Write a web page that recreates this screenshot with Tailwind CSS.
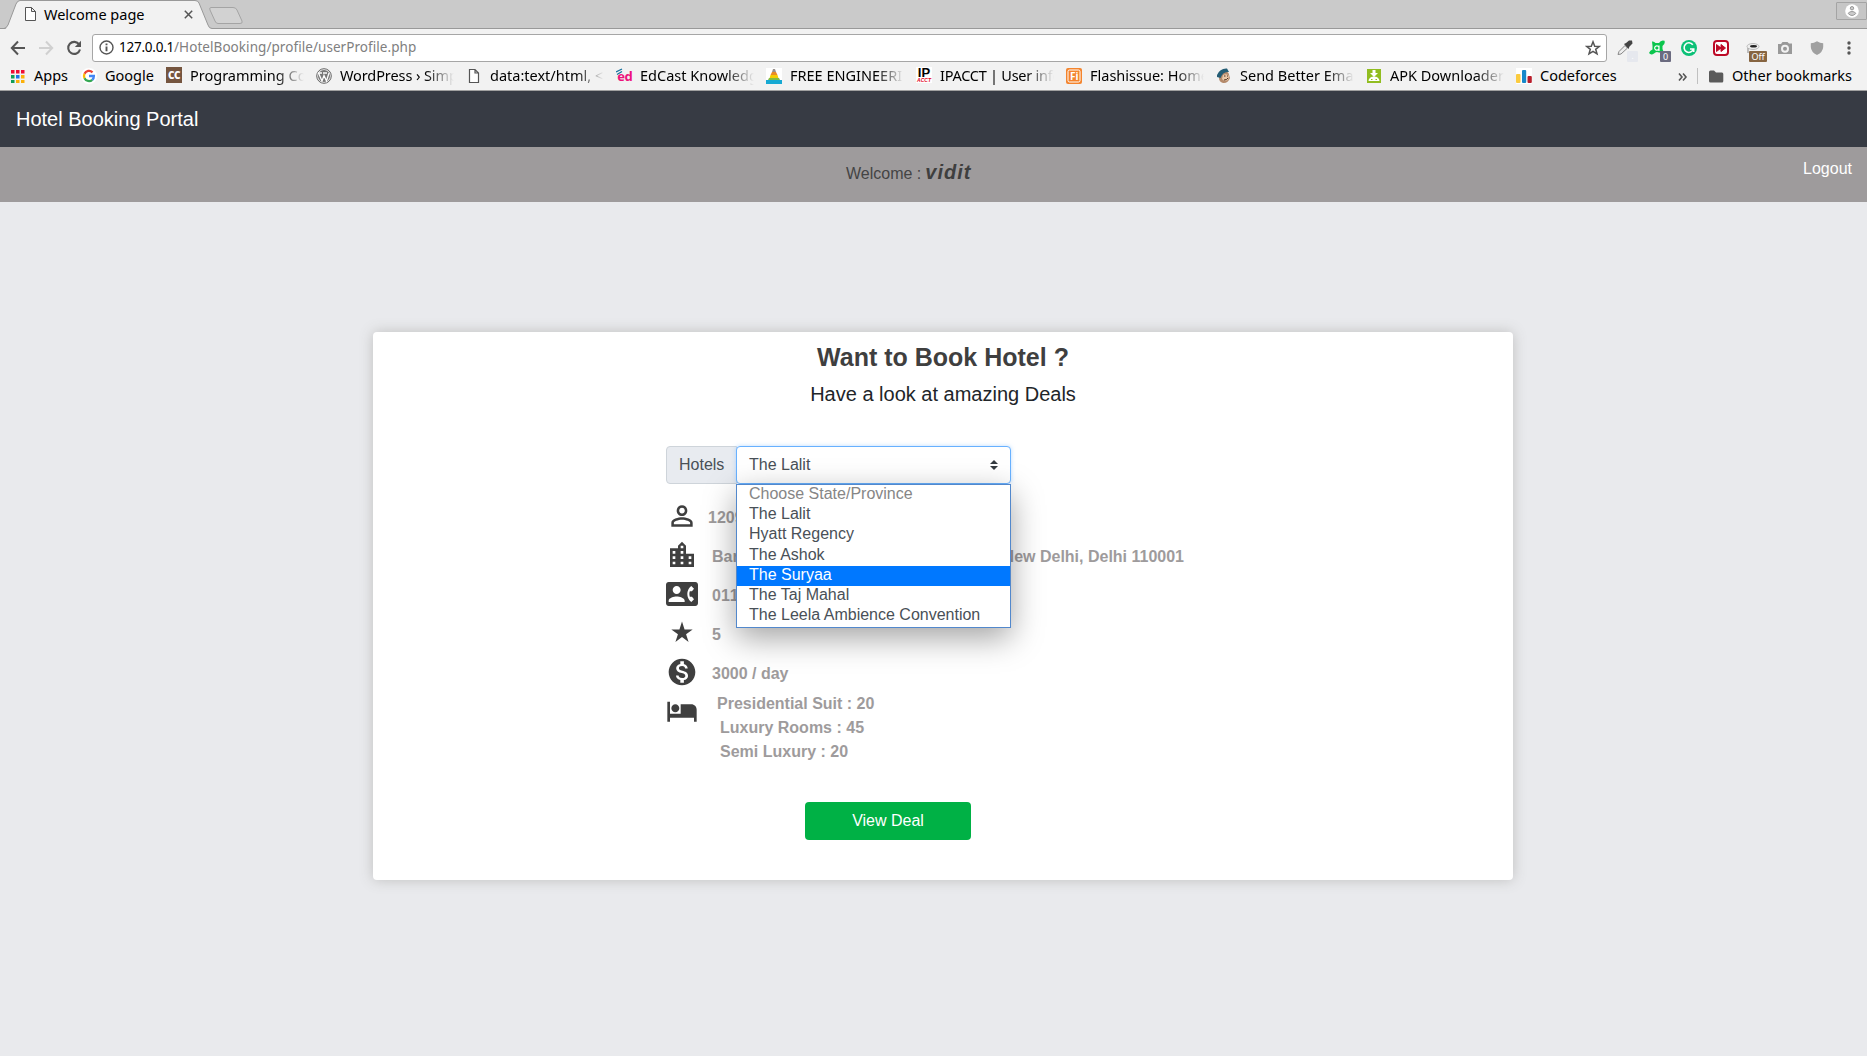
<!DOCTYPE html>
<html lang="en"><head><meta charset="utf-8"><title>Welcome page</title>
<script src="https://cdn.jsdelivr.net/npm/@tailwindcss/browser@4"></script></head>
<body class="h-[1056px] w-[1867px] overflow-hidden bg-[#e9eaed] font-['Liberation_Sans',sans-serif] text-base text-[#212529]">
<div class="h-[91px] border-b border-[#a0a0a0] bg-[#f2f2f2] font-['Noto_Sans',sans-serif] text-[14.5px] text-black">
  <!-- tab strip -->
  <div class="relative flex h-[29px] border-b border-[#999] bg-[#cacaca]">
    <svg class="absolute left-0 top-0" width="250" height="29" fill="none"><path d="M5 29 C7 28 7 27 8 25 L16 4 Q18 .5 20 .5 H195 Q198 .5 199 3 L208 25 Q209 28.500 212 28.500 V29Z" fill="#f2f2f2"/><path d="M0 28.500H4Q6 28.500 8 25L16 4Q17.500 .5 20 .5H195Q198 .5 199 3L208 25Q209 28.500 212 28.500" stroke="#999"/><path d="M211 7.500H233Q236 7.500 237 10L242 21Q243 23.500 240 23.500H218Q216 23.500 215 21L210 10Q209 7.500 211 7.500Z" fill="#d2d2d2" stroke="#a4a4a4"/></svg>
    <div class="relative flex h-full w-[205px] items-center pl-[25px]">
      <svg width="11" height="14" viewBox="0 0 11 14" fill="#fff" stroke="#555"><path d="M.5.5H6.500L10.500 4.500V13.500H.5ZM6.500 .5V4.500H10.500"/></svg>
      <span class="ml-2 w-[140px] leading-7">Welcome page</span>
      <svg width="9" height="9" stroke="#555" stroke-width="1.500"><path d="M.8.8 8.200 8.200M8.200.8.8 8.200"/></svg>
    </div>
    <div class="ml-auto mt-[2px] flex h-[18px] w-[31px] items-center justify-center rounded-[1px] border border-[#a4a4a4] bg-[#c6c6c6]"><svg width="14" height="14"><circle cx="7" cy="7" r="6.800" fill="#fff"/><circle cx="7" cy="4.200" r="1.700" fill="#ccc" stroke="#999"/><path d="M3.200 9.500Q4 7.500 7 7.500T10.800 9.500Q7 13.500 3.200 9.500" fill="#ccc" stroke="#999"/></svg></div>
  </div>
  <!-- toolbar -->
  <div class="flex h-[33px] items-center pl-[10px] pt-1">
    <svg width="16" height="16" fill="none" stroke="#555" stroke-width="2"><path d="M15 8H2.500M8 1.500 1.800 8 8 14.500"/></svg>
    <svg class="ml-[13px]" width="16" height="16" fill="none" stroke="#d0d0d0" stroke-width="2"><path d="M0 8H12.500M7 1.500 13.200 8 7 14.500"/></svg>
    <svg class="ml-[11px]" width="16" height="16" fill="none" stroke="#555" stroke-width="2.100"><path d="M13.200 4.500A6 6 0 1 0 14 9.500"/><path d="M15 .8V7H8.800Z" fill="#555" stroke="none"/></svg>
    <div class="ml-[10px] flex h-[28px] w-[1515px] items-center rounded-[3px] border border-[#a6a6a6] bg-white pl-[6px] pr-[5px]">
      <svg width="15" height="15" fill="none" stroke="#555" stroke-width="1.400"><circle cx="7.500" cy="7.500" r="6.500"/><path d="M7.500 6.500V11.300M7.500 3.500V5.300" stroke-width="1.900"/></svg>
      <span class="ml-[5px] whitespace-nowrap text-[13.5px] tracking-[0.06px] text-[#808080]"><span class="tracking-[-0.24px] text-black">127.0.0.1</span>/HotelBooking/profile/userProfile.php</span>
      <svg class="ml-auto" width="16" height="16" viewBox="0 0 16 16" fill="none" stroke="#555" stroke-width="1.500"><path d="M8 1.800 9.700 6.200 14.400 6.400 10.700 9.300 12 13.900 8 11.300 4 13.900 5.300 9.300 1.600 6.400 6.300 6.200Z"/></svg>
    </div>
    <div class="ml-[9px] flex items-center">
      <div class="relative h-4 w-[33px]"><svg width="18" height="16"><path d="M2 14.500 3 11.500 9 5.500 11.500 8 5 14Z" fill="#eee" stroke="#888"/><path d="M8 4 10 3 13 .5 16 .5 16.500 3.500 13.500 6.500 12.500 9Z" fill="#444"/></svg><span class="absolute left-[11px] top-[11px] flex h-[11px] w-[11px] items-center justify-center rounded-[1px] bg-[#e6e8ee] text-[8px] leading-none text-white">.</span></div>
      <div class="relative h-4 w-8"><svg width="17" height="16"><path d="M3 1.500Q5 1 6.500 3H10Q12-.5 15.500.8Q16.500 4 13.500 6V9L15 13 10 12.500Q7 11 5 13.500Q2 15.500 0 13Q1 10 3.500 9.500V6Z" fill="#0bc54d"/><path d="M10 5.500V11M10 7.500A2.200 2.200 0 1 0 10 8.500" fill="none" stroke="#fff" stroke-width="1.200"/></svg><span class="absolute left-[11px] top-[11px] flex h-[11px] w-[11px] items-center justify-center rounded-[1px] bg-[#6b6b80] text-[9px] leading-none text-white">0</span></div>
      <svg class="mr-4" width="16" height="16"><circle cx="8" cy="8" r="8" fill="#0cc177"/><path d="M11.800 4.800A4.800 4.800 0 1 0 12.500 9H9M12.700 8.500V12" fill="none" stroke="#fff" stroke-width="1.600"/></svg>
      <svg class="mr-4" width="16" height="16"><rect x="1" y="1" width="14" height="14" rx="3" fill="#fff" stroke="#bd0a27" stroke-width="2"/><path d="M3.500 4.500 8 8 3.500 11.500ZM8 4.500 12.500 8 8 11.500Z" fill="#bd0a27" stroke="#bd0a27"/></svg>
      <div class="relative h-4 w-8"><svg width="16" height="16"><ellipse cx="8" cy="6.500" rx="6" ry="3" fill="#eee" stroke="#bbb"/><ellipse cx="8.500" cy="6.200" rx="3.500" ry="1.300" fill="#222"/><path d="M3 8V13" stroke="#aaa" stroke-width="1.500"/></svg><span class="absolute left-[4px] top-[11px] flex h-[11px] w-[18px] items-center justify-center rounded-[1px] bg-[#876541] text-[9px] leading-none text-white">Off</span></div>
      <svg class="mr-4" width="16" height="16"><path d="M1 4H4L5.500 2H10.500L12 3.500H15V14H1Z" fill="#999"/><circle cx="8" cy="8.700" r="3" fill="#999" stroke="#f2f2f2" stroke-width="2"/></svg>
      <svg class="mr-4" width="16" height="16"><path d="M8 1.200Q11 3 14.200 3.200V7Q14 12 8 15Q2 12 1.800 7V3.200Q5 3 8 1.200" fill="#a0a0a0"/></svg>
      <svg width="16" height="16" fill="#555"><circle cx="8" cy="3" r="1.700"/><circle cx="8" cy="8" r="1.700"/><circle cx="8" cy="13" r="1.700"/></svg>
    </div>
  </div>
  <!-- bookmarks bar -->
  <div class="flex h-[28px] items-center whitespace-nowrap pl-[10px] leading-[26px] [&>div]:h-[26px] [&>div]:-mt-[2px] [&_svg]:mt-px">
    <div class="flex w-[71px] items-center gap-[8px]"><svg width="16" height="16"><path d="M1 2h3.500v3.500H1zM6 2h3.500v3.500H6zM11 2h3.500v3.500H11z" fill="#ef0c35"/><path d="M1 7h3.500v3.500H1z" fill="#0f9d58"/><path d="M6 7h3.500v3.500H6z" fill="#1a73e8"/><path d="M11 7h3.500v3.500H11zM6 12h3.500v3H6zM11 12h3.500v3H11z" fill="#fbb009"/><path d="M1 12h3.500v3H1z" fill="#0f9d58"/></svg>Apps</div>
    <div class="flex w-[85px] items-center gap-[8px]"><svg width="16" height="16" viewBox="0 0 16 16"><circle cx="8" cy="8" r="8" fill="#fff"/><g fill="none" stroke-width="2.300"><path d="M11.500 4.300A5 5 0 0 0 3.500 5.800" stroke="#ea4335"/><path d="M3.500 5.800A5 5 0 0 0 3.500 10.200" stroke="#fbbc05"/><path d="M3.500 10.200A5 5 0 0 0 11.300 11.800" stroke="#34a853"/><path d="M11.300 11.800A5 5 0 0 0 12.900 8H8" stroke="#4285f4"/></g></svg>Google</div>
    <div class="flex w-[150px] items-center gap-[8px]"><span class="flex h-4 w-4 shrink-0 items-center justify-center bg-[#75553f] text-[10px] font-black leading-none tracking-tighter text-white">CC</span><span class="w-[114px] overflow-hidden mask-r-from-75% mask-r-to-100%">Programming Co</span></div>
    <div class="flex w-[150px] items-center gap-[8px]"><svg class="shrink-0" width="16" height="16"><circle cx="8" cy="8" r="7.300" fill="#eee" stroke="#666"/><circle cx="8" cy="8" r="6" fill="#777"/><path d="M2.500 5 6 13 8 7.500 10.500 13 13 5M1.800 5H6M7 5H11" fill="none" stroke="#fff" stroke-width="1.300"/></svg><span class="w-[114px] overflow-hidden tracking-[-0.1px] mask-r-from-75% mask-r-to-100%">WordPress › Simp</span></div>
    <div class="flex w-[150px] items-center gap-[8px]"><svg class="shrink-0" width="16" height="16" fill="#fff" stroke="#555" stroke-width="1.200"><path d="M3.500 1.500H9L12.500 5V14.500H3.500ZM9 1.500V5H12.500"/></svg><span class="w-[114px] overflow-hidden mask-r-from-75% mask-r-to-100%">data:text/html, &lt;</span></div>
    <div class="flex w-[150px] items-center gap-[8px]"><span class="relative flex h-4 w-4 shrink-0 items-end justify-end text-[13px] font-bold leading-[13px] tracking-tighter text-[#ed127c]">ed<svg class="absolute left-0 top-0" width="8" height="8" fill="none" stroke="#16719e" stroke-width="1.300"><path d="M0 4 6 1M1 6.500 6 3.500"/></svg></span><span class="w-[114px] overflow-hidden mask-r-from-75% mask-r-to-100%">EdCast Knowledg</span></div>
    <div class="flex w-[150px] items-center gap-[8px]"><svg class="shrink-0" width="16" height="16"><path fill="#fff" d="M0 0h16v16H0z"/><path d="M7 1H9L10 4H6Z" fill="#98908a"/><path d="M6 4H10L11.500 7H4.500Z" fill="#e98b25"/><path d="M4.500 7H11.500L13 12H3Z" fill="#f5cc00"/><path d="M0 12H16V16H0Z" fill="#16a9d3"/><path d="M3 10H13L14 12H2Z" fill="#80bd45"/></svg><span class="w-[114px] overflow-hidden mask-r-from-75% mask-r-to-100%">FREE ENGINEERI</span></div>
    <div class="flex w-[150px] items-center gap-[8px]"><span class="flex h-4 w-4 shrink-0 flex-col items-center justify-center bg-white font-['Liberation_Sans',sans-serif] font-bold"><span class="text-[13px] leading-[11px]">IP</span><span class="text-[5px] italic leading-[5px] text-[#e3001b]">ACCT</span></span><span class="w-[114px] overflow-hidden tracking-[-0.25px] mask-r-from-75% mask-r-to-100%">IPACCT | User info</span></div>
    <div class="flex w-[150px] items-center gap-[8px]"><svg class="shrink-0" width="16" height="16"><rect width="16" height="16" rx="2" fill="#f4842d"/><rect x="2" y="2" width="12" height="12" rx="1.500" fill="none" stroke="#fff"/><text x="4" y="12" font-size="10" font-weight="bold" fill="#fff">Fi</text></svg><span class="w-[114px] overflow-hidden mask-r-from-75% mask-r-to-100%">Flashissue: Home</span></div>
    <div class="flex w-[150px] items-center gap-[8px]"><svg class="shrink-0" width="16" height="16"><path d="M4 5Q9 0 12.500 5L14 10Q12 15.500 7 15Q3 14 3 10Z" fill="#b58a6b"/><path d="M1 7Q4 0 11 .5L13 4Q7 3 4.500 10L1 9Z" fill="#245d75"/><path d="M7 7Q11 5 13 8L12 12Q8 14 6 11Z" fill="#ebc8a7"/><path d="M8 8H9.500M11 8H12M8 12Q11 12 12 10" stroke="#4b3325" fill="none"/></svg><span class="w-[114px] overflow-hidden mask-r-from-75% mask-r-to-100%">Send Better Ema</span></div>
    <div class="flex w-[150px] items-center gap-[8px]"><svg class="shrink-0" width="16" height="16"><path fill="#91bd20" d="M1 1h14v14H1z"/><path d="M6.500 2H9.500V5H12L8 9 4 5H6.500ZM2.500 13A5.500 4.500 0 0 1 13.500 13Z" fill="#fff"/><path d="M5 11.500h1.500M9.500 11.500H11" stroke="#91bd20"/></svg><span class="w-[114px] overflow-hidden mask-r-from-75% mask-r-to-100%">APK Downloader</span></div>
    <div class="flex w-[160px] items-center gap-[8px]"><svg width="16" height="16"><path fill="#fff" d="M0 0h16v16H0z"/><rect x="0" y="6" width="4.500" height="9" rx="1" fill="#fbcb3e"/><rect x="6" y="2" width="4.200" height="13" rx="1" fill="#1788c9"/><rect x="11.500" y="8" width="4.300" height="7" rx="1" fill="#b91e2b"/></svg>Codeforces</div>
    <svg class="ml-[2px]" width="10" height="10" fill="none" stroke="#555" stroke-width="1.600"><path d="M1 1.500 4 5 1 8.500M5 1.500 8 5 5 8.500"/></svg>
    <span class="ml-[9px] mr-[11px] h-4 w-px bg-[#c0c0c0]"></span>
    <svg width="15" height="13"><path d="M0 2Q0 .5 1.500.5H5L7 2.500H13Q14.300 2.500 14.300 4V11Q14.300 12.500 13 12.500H1.500Q0 12.500 0 11Z" fill="#5a5a5a"/></svg>
    <div class="ml-[8px]">Other bookmarks</div>
  </div>
</div>

<nav class="flex h-14 items-center bg-[#373b44] pl-4 text-xl text-white">Hotel Booking Portal</nav>
<header class="relative h-[55px] bg-[#9e9b9c] text-[#444]">
  <p class="flex items-baseline gap-1 pl-[846px] pt-[11px]">Welcome : <strong class="text-xl italic tracking-[1px] text-[#3f3f3f]">vidit</strong></p>
  <a class="absolute right-[15px] top-[10px] text-white">Logout</a>
</header>

<main class="ml-[373px] mt-[130px] flex h-[548px] w-[1140px] flex-col rounded bg-white shadow-[0_0_14px_#bfbfbf]">
  <h1 class="pt-[10px] text-center text-[25px] font-bold leading-[31px] text-[#3f3f3f]">Want to Book Hotel ?</h1>
  <h2 class="mt-[9px] text-center text-xl leading-6">Have a look at amazing Deals</h2>
  <div class="relative ml-[293px] mt-[40px] flex h-[38px] w-[345px] text-[#495057]">
    <span class="flex w-[71px] items-center rounded-l border border-[#ced4da] bg-[#e8ebf0] pl-3">Hotels</span>
    <div class="-ml-px flex w-[275px] items-center justify-between rounded border border-[#68b1ff] bg-white pl-3 pr-[12px] shadow-[0_0_4px_#80bdff88]">The Lalit<svg width="8" height="10" fill="#343a40"><path d="M4 0 8 4H0ZM0 6H8L4 10Z"/></svg></div>
    <ul class="absolute left-[70px] top-[38px] z-10 h-[144px] w-[275px] border border-[#5288cc] bg-white leading-[17px] shadow-[0_10px_30px_rgba(0,0,0,0.36)]">
      <li class="h-5 pl-3 text-[#868686]">Choose State/Province</li>
      <li class="h-5 pl-3">The Lalit</li>
      <li class="h-[21px] pl-3">Hyatt Regency</li>
      <li class="h-5 pl-3">The Ashok</li>
      <li class="h-5 bg-[#0078ff] pl-3 text-white">The Suryaa</li>
      <li class="h-5 pl-3">The Taj Mahal</li>
      <li class="h-5 pl-3">The Leela Ambience Convention</li>
    </ul>
  </div>
  <div class="ml-[293px] mt-[16px] flex flex-col gap-[7px] font-bold text-[#9e9b9c]">
    <div class="flex h-8 items-center gap-[10px]"><svg width="32" height="32" viewBox="0 0 24 24" fill="#3f3f3f"><path d="M12 5.900c1.160 0 2.100.94 2.100 2.100s-.94 2.100-2.100 2.100S9.900 9.160 9.900 8s.94-2.100 2.100-2.100m0 9c2.970 0 6.100 1.460 6.100 2.100v1.100H5.900V17c0-.64 3.130-2.100 6.100-2.100M12 4C9.790 4 8 5.790 8 8s1.790 4 4 4 4-1.790 4-4-1.790-4-4-4zm0 9c-2.670 0-8 1.340-8 4v3h16v-3c0-2.660-5.330-4-8-4z"/></svg><span class="pt-[3px]">1209</span></div>
    <div class="flex h-8 items-center gap-[14px]"><svg width="32" height="32" viewBox="0 0 24 24" fill="#3f3f3f"><path d="M15 11V5l-3-3-3 3v2H3v14h18V11h-6zm-8 8H5v-2h2v2zm0-4H5v-2h2v2zm0-4H5V9h2v2zm6 8h-2v-2h2v2zm0-4h-2v-2h2v2zm0-4h-2V9h2v2zm0-4h-2V5h2v2zm6 12h-2v-2h2v2zm0-4h-2v-2h2v2z"/></svg><span class="flex w-[472px] justify-between pt-[3px]"><span>Bar</span><span>New Delhi, Delhi 110001</span></span></div>
    <div class="flex h-8 items-center gap-[14px]"><svg width="32" height="32" viewBox="0 0 24 24" fill="#3f3f3f"><path d="M22 3H2C.9 3 0 3.900 0 5v14c0 1.100.9 2 2 2h20c1.100 0 1.990-.9 1.990-2L24 5c0-1.100-.9-2-2-2zM8 6c1.660 0 3 1.340 3 3s-1.340 3-3 3-3-1.340-3-3 1.340-3 3-3zm6 12H2v-1c0-2 4-3.100 6-3.100s6 1.100 6 3.100v1zm3.850-4h1.640L21 16l-1.990 1.990c-1.310-.98-2.280-2.380-2.730-3.990-.18-.64-.28-1.310-.28-2s.1-1.360.28-2c.45-1.620 1.420-3.010 2.730-3.990L21 8l-1.510 2h-1.640c-.22.63-.35 1.300-.35 2s.13 1.370.35 2z"/></svg><span class="pt-[3px] [font-kerning:none]">011</span></div>
    <div class="flex h-8 items-center gap-[14px]"><svg width="32" height="32" viewBox="0 0 18 18" fill="#3f3f3f"><path d="M9 11.300l3.710 2.700-1.420-4.360L15 7h-4.550L9 2.500 7.550 7H3l3.710 2.640L5.290 14z"/></svg><span class="pt-[3px]">5</span></div>
    <div class="flex h-8 items-center gap-[14px]"><svg width="32" height="32" viewBox="0 0 24 24" fill="#3f3f3f"><path d="M12 2C6.480 2 2 6.480 2 12s4.480 10 10 10 10-4.480 10-10S17.520 2 12 2zm1.410 16.090V20h-2.670v-1.930c-1.710-.36-3.160-1.460-3.270-3.400h1.960c.1 1.050.82 1.870 2.650 1.870 1.960 0 2.400-.98 2.400-1.590 0-.83-.44-1.610-2.670-2.140-2.480-.6-4.180-1.620-4.180-3.670 0-1.720 1.390-2.840 3.110-3.210V4h2.670v1.950c1.860.45 2.790 1.860 2.850 3.390H14.300c-.05-1.110-.64-1.870-2.220-1.870-1.500 0-2.400.68-2.400 1.640 0 .84.65 1.390 2.670 1.910s4.180 1.390 4.180 3.910c-.01 1.830-1.380 2.830-3.120 3.160z"/></svg><span class="pt-[3px]">3000 / day</span></div>
    <div class="flex h-[72px] items-start gap-[19px]"><svg width="32" height="32" viewBox="0 0 24 24" fill="#3f3f3f"><path d="M7 13c1.660 0 3-1.340 3-3S8.660 7 7 7s-3 1.340-3 3 1.340 3 3 3zm12-6h-8v7H3V5H1v15h2v-3h18v3h2v-9c0-2.210-1.790-4-4-4z"/></svg><div class="-mt-[3px] leading-6"><p>Presidential Suit : 20</p><p class="pl-[3px]">Luxury Rooms : 45</p><p class="pl-[3px]">Semi Luxury : 20</p></div></div>
  </div>
  <button class="ml-[432px] mt-[35px] h-[38px] w-[166px] rounded bg-[#00b145] text-white">View Deal</button>
</main>
</body></html>
